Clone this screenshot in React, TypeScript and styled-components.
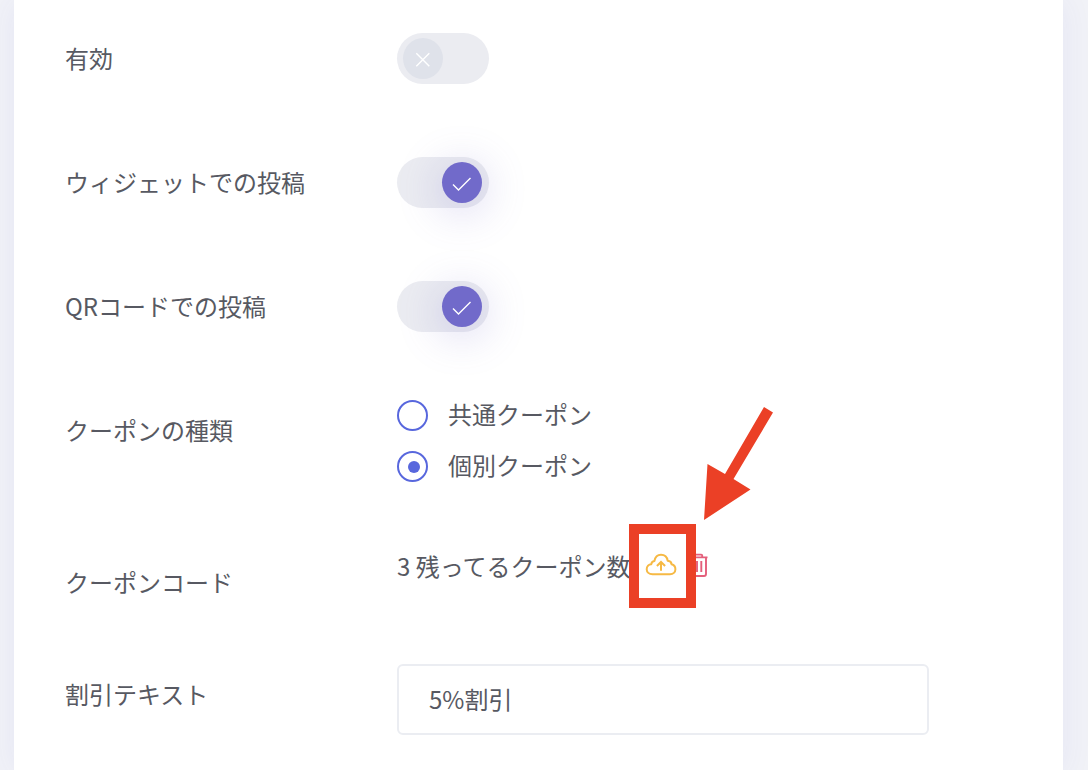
import { useState } from "react";
import type { ReactNode } from "react";
import styled, { createGlobalStyle } from "styled-components";

const GlobalStyle = createGlobalStyle`
  *, *::before, *::after { box-sizing: border-box; }
  html, body, #root { min-height: 100vh; }
  body {
    margin: 0;
    background: #f1f2f7;
    color: #575962;
    font-family: "Noto Sans CJK JP", sans-serif;
    font-size: 24px;
    line-height: 36px;
    overflow-x: hidden;
  }
`;

const Page = styled.main`
  min-height: 100vh;
  padding: 0 25px 0 14px;
  display: flex;
`;

const Panel = styled.form`
  flex: 1;
  min-width: 0;
  padding: 28px 51px 35px;
  background: #fff;
  box-shadow: 0 2px 30px rgba(69, 65, 208, 0.07);
  display: flex;
  flex-direction: column;
  gap: 64px;
`;

const Row = styled.div`
  display: grid;
  grid-template-columns: 332px minmax(0, 532px);
  align-items: start;
`;

const Label = styled.label`
  padding-top: 12px;
`;

const SwitchBox = styled.span`
  position: relative;
  display: block;
  width: 92px;
  height: 51px;
  margin: 5px 0 4px;
`;

const SwitchInput = styled.input`
  appearance: none;
  display: block;
  width: 100%;
  height: 100%;
  margin: 0;
  border-radius: 26px;
  background: #ebecf1;
  cursor: pointer;
`;

const Thumb = styled.span<{ $on: boolean }>`
  position: absolute;
  top: 5px;
  left: ${({ $on }) => ($on ? 45 : 6)}px;
  width: 40px;
  height: 41px;
  border-radius: 50%;
  background: ${({ $on }) => ($on ? "#716aca" : "#dfe2ea")};
  box-shadow: ${({ $on }) =>
    $on ? "0 6px 40px 6px rgba(113, 106, 202, 0.22)" : "none"};
  pointer-events: none;

  svg {
    display: block;
    width: 40px;
    height: 41px;
  }
`;

const RadioList = styled.div`
  display: flex;
  flex-direction: column;
  gap: 20px;
  padding-bottom: 6px;
`;

const RadioLabel = styled.label`
  display: flex;
  align-items: center;
  gap: 20px;
  height: 31px;
  cursor: pointer;
`;

const RadioText = styled.span`
  padding-bottom: 4px;
`;

const RadioInput = styled.input`
  appearance: none;
  flex: none;
  display: grid;
  place-items: center;
  width: 31px;
  height: 31px;
  margin: 0;
  border: 2px solid #5867dd;
  border-radius: 50%;

  &:checked::before {
    content: "";
    width: 12px;
    height: 12px;
    margin-left: 2px;
    border-radius: 50%;
    background: #5867dd;
  }
`;

const CodeLine = styled.div`
  display: flex;
  align-items: center;
  height: 28px;
  white-space: nowrap;
`;

const IconButton = styled.button<{ $color: string; $gap: number }>`
  position: relative;
  flex: none;
  margin: 0 0 0 ${({ $gap }) => $gap}px;
  padding: 0;
  border: 0;
  background: none;
  color: ${({ $color }) => $color};
  cursor: pointer;

  svg {
    display: block;
  }
`;

const Highlight = styled.span`
  position: absolute;
  z-index: 1;
  top: -28px;
  left: -16px;
  width: 67px;
  height: 84px;
  border: 10px solid #eb4026;
`;

const ArrowDrawing = styled.svg`
  position: absolute;
  z-index: 1;
  left: 55px;
  bottom: 56px;
`;

const TextInput = styled.input`
  width: 100%;
  height: 71px;
  padding: 0 30px 2px;
  border: 2px solid #ebedf2;
  border-radius: 6px;
  background: #fff;
  color: inherit;
  font: inherit;
  outline: none;
`;

function Switch({ id, initial }: { id: string; initial: boolean }) {
  const [on, setOn] = useState(initial);
  return (
    <SwitchBox>
      <SwitchInput
        id={id}
        type="checkbox"
        role="switch"
        checked={on}
        onChange={(e) => setOn(e.target.checked)}
      />
      <Thumb $on={on}>
        <svg viewBox="0 0 40 41" fill="none" stroke="#fff" strokeWidth="1.4" aria-hidden="true">
          {on ? (
            <path d="M11 22.5 L16.5 28 L28.5 16" />
          ) : (
            <path d="M13.3 15.3 L26.3 28.3 M26.3 15.3 L13.3 28.3" />
          )}
        </svg>
      </Thumb>
    </SwitchBox>
  );
}

function Field({ id, label, children }: { id: string; label: string; children: ReactNode }) {
  return (
    <Row>
      <Label htmlFor={id}>{label}</Label>
      {children}
    </Row>
  );
}

function CloudUploadIcon() {
  return (
    <svg width="32" height="28" viewBox="0 0 32 28" fill="none" stroke="currentColor" strokeWidth="2" aria-hidden="true">
      <path
        d="M7.5 22.2 C4 22.2 1.7 20 1.7 17.2 C1.7 14.6 3.7 12.4 6.3 12.2 C6.5 10.4 7.6 9.3 9.4 9.1 C10.2 5 12.6 2.8 16 2.8 C19.7 2.8 22.1 5 22.7 8.8 C25.2 9 26.4 10.2 26.5 12.2 C28.8 12.8 30.4 14.8 30.4 17.2 C30.4 20 28.2 22.2 25 22.2 Z"
        strokeLinejoin="round"
      />
      <path d="M16 18.8 V10.4 M11.9 14 L16 10 L20.1 14" />
    </svg>
  );
}

function TrashIcon() {
  return (
    <svg width="18" height="28" viewBox="0 0 18 28" fill="none" stroke="currentColor" strokeWidth="1.9" aria-hidden="true">
      <path d="M0.5 5.4 H17.5 M4.8 5 V3.6 Q4.8 2.6 5.8 2.6 H11.2 Q12.2 2.6 12.2 3.6 V5" />
      <path d="M2 5.5 V22 Q2 24 4 24 H14 Q16 24 16 22 V5.5" />
      <path d="M7 9 V20 M11.3 9 V20" />
    </svg>
  );
}

export default function App() {
  const [kind, setKind] = useState("individual");
  return (
    <>
      <GlobalStyle />
      <Page>
        <Panel onSubmit={(e) => e.preventDefault()}>
          <Field id="enabled" label="有効">
            <Switch id="enabled" initial={false} />
          </Field>
          <Field id="widget" label="ウィジェットでの投稿">
            <Switch id="widget" initial />
          </Field>
          <Field id="qr" label="QRコードでの投稿">
            <Switch id="qr" initial />
          </Field>
          <Field id="kind-common" label="クーポンの種類">
            <RadioList>
              <RadioLabel>
                <RadioInput
                  id="kind-common"
                  type="radio"
                  name="kind"
                  checked={kind === "common"}
                  onChange={() => setKind("common")}
                />
                <RadioText>共通クーポン</RadioText>
              </RadioLabel>
              <RadioLabel>
                <RadioInput
                  type="radio"
                  name="kind"
                  checked={kind === "individual"}
                  onChange={() => setKind("individual")}
                />
                <RadioText>個別クーポン</RadioText>
              </RadioLabel>
            </RadioList>
          </Field>
          <Field id="upload" label="クーポンコード">
            <CodeLine>
              <span>3 残ってるクーポン数</span>
              <IconButton id="upload" type="button" $color="#f6b944" $gap={14}>
                <CloudUploadIcon />
                <Highlight />
                <ArrowDrawing width="80" height="120" viewBox="0 0 80 120" fill="#eb4026" aria-hidden="true">
                  <path d="M4 116 L7.5 60 L25 70 L64 3 L73 8.5 L33.5 75 L50.5 85.5 Z" />
                </ArrowDrawing>
              </IconButton>
              <IconButton type="button" aria-label="削除" $color="#e45f7b" $gap={13}>
                <TrashIcon />
              </IconButton>
            </CodeLine>
          </Field>
          <Field id="discount" label="割引テキスト">
            <TextInput id="discount" type="text" defaultValue="5%割引" />
          </Field>
        </Panel>
      </Page>
    </>
  );
}
